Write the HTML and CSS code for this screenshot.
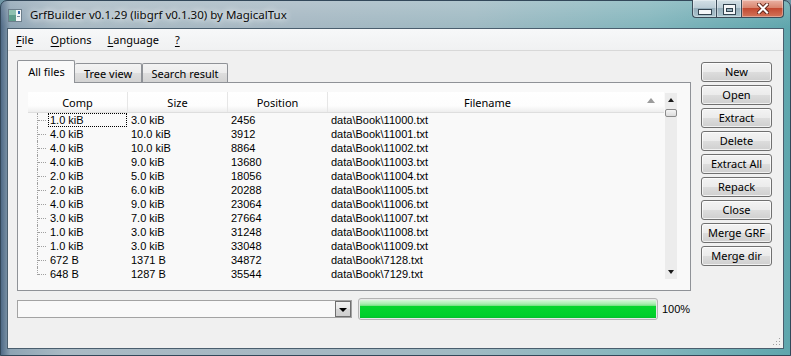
FILE: index.html
```html
<!DOCTYPE html>
<html>
<head>
<meta charset="utf-8">
<title>GrfBuilder</title>
<link rel="stylesheet" href="styles.css">
</head>
<body>
<div class="window">
  <div class="titlebar">
    <svg class="appicon" width="14" height="13" viewBox="0 0 14 13">
      <rect x="0.5" y="0.5" width="13" height="12" fill="#f4f6f8" stroke="#6d7f8c"/>
      <rect x="1" y="1" width="7" height="11" fill="#5f9c8c"/>
      <rect x="1" y="1" width="7" height="5" fill="#8fc0b0"/>
      <rect x="10" y="2" width="2" height="3" fill="#2f63a8"/>
      <rect x="9" y="7" width="3" height="1" fill="#7c8c98"/>
    </svg>
    <span class="title">GrfBuilder v0.1.29 (libgrf v0.1.30) by MagicalTux</span>
    <div class="caption">
      <div class="cap min"><span class="min-glyph"></span></div>
      <div class="cap max"><span class="max-glyph"></span></div>
      <div class="cap close">
        <svg width="12" height="11" viewBox="0 0 12 11">
          <path d="M2 1.5 L10 9.5 M10 1.5 L2 9.5" stroke="#5a2016" stroke-width="4" stroke-linecap="square"/>
          <path d="M2 1.5 L10 9.5 M10 1.5 L2 9.5" stroke="#ffffff" stroke-width="2.2" stroke-linecap="square"/>
        </svg>
      </div>
    </div>
  </div>
  <div class="client">
    <div class="menubar">
      <span class="menu first"><u>F</u>ile</span>
      <span class="menu"><u>O</u>ptions</span>
      <span class="menu"><u>L</u>anguage</span>
      <span class="menu"><u>?</u></span>
    </div>
    <div class="main">
      <div class="left">
        <div class="tabs">
          <div class="tab active">All files</div>
          <div class="tab t2">Tree view</div>
          <div class="tab t3">Search result</div>
        </div>
        <div class="pane">
          <div class="tree">
            <div class="list">
              <div class="header">
                <div class="hcell sep">Comp</div>
                <div class="hcell sep">Size</div>
                <div class="hcell sep">Position</div>
                <div class="hcell last"><span class="hlabel">Filename</span><span class="sort"></span></div>
              </div>
              <div class="row"><div class="c1"><span class="txt focus">1.0 kiB</span></div><div class="c">3.0 kiB</div><div class="c">2456</div><div class="c">data\Book\11000.txt</div></div>
              <div class="row"><div class="c1"><span class="txt">4.0 kiB</span></div><div class="c">10.0 kiB</div><div class="c">3912</div><div class="c">data\Book\11001.txt</div></div>
              <div class="row"><div class="c1"><span class="txt">4.0 kiB</span></div><div class="c">10.0 kiB</div><div class="c">8864</div><div class="c">data\Book\11002.txt</div></div>
              <div class="row"><div class="c1"><span class="txt">4.0 kiB</span></div><div class="c">9.0 kiB</div><div class="c">13680</div><div class="c">data\Book\11003.txt</div></div>
              <div class="row"><div class="c1"><span class="txt">2.0 kiB</span></div><div class="c">5.0 kiB</div><div class="c">18056</div><div class="c">data\Book\11004.txt</div></div>
              <div class="row"><div class="c1"><span class="txt">2.0 kiB</span></div><div class="c">6.0 kiB</div><div class="c">20288</div><div class="c">data\Book\11005.txt</div></div>
              <div class="row"><div class="c1"><span class="txt">4.0 kiB</span></div><div class="c">9.0 kiB</div><div class="c">23064</div><div class="c">data\Book\11006.txt</div></div>
              <div class="row"><div class="c1"><span class="txt">3.0 kiB</span></div><div class="c">7.0 kiB</div><div class="c">27664</div><div class="c">data\Book\11007.txt</div></div>
              <div class="row"><div class="c1"><span class="txt">1.0 kiB</span></div><div class="c">3.0 kiB</div><div class="c">31248</div><div class="c">data\Book\11008.txt</div></div>
              <div class="row"><div class="c1"><span class="txt">1.0 kiB</span></div><div class="c">3.0 kiB</div><div class="c">33048</div><div class="c">data\Book\11009.txt</div></div>
              <div class="row"><div class="c1"><span class="txt">672 B</span></div><div class="c">1371 B</div><div class="c">34872</div><div class="c">data\Book\7128.txt</div></div>
              <div class="row lastrow"><div class="c1"><span class="txt">648 B</span></div><div class="c">1287 B</div><div class="c">35544</div><div class="c">data\Book\7129.txt</div></div>
            </div>
            <div class="vscroll">
              <div class="arrow"><span class="tri-up"></span></div>
              <div class="thumb"></div>
              <div class="track"></div>
              <div class="arrow"><span class="tri-down"></span></div>
            </div>
          </div>
        </div>
        <div class="bottom">
          <div class="combo"><div class="combo-btn"><span class="tri-down dark"></span></div></div>
          <div class="progress"><div class="fill"></div></div>
          <span class="pct">100%</span>
        </div>
      </div>
      <div class="buttons">
        <div class="btn">New</div>
        <div class="btn">Open</div>
        <div class="btn">Extract</div>
        <div class="btn">Delete</div>
        <div class="btn">Extract All</div>
        <div class="btn">Repack</div>
        <div class="btn">Close</div>
        <div class="btn">Merge GRF</div>
        <div class="btn">Merge dir</div>
      </div>
    </div>
    <svg class="grip" width="8" height="8" viewBox="0 0 8 8">
      <rect x="6" y="0" width="1" height="1" fill="#a0a0a0"/>
      <rect x="3" y="3" width="1" height="1" fill="#a0a0a0"/>
      <rect x="6" y="3" width="1" height="1" fill="#a0a0a0"/>
      <rect x="0" y="6" width="1" height="1" fill="#a0a0a0"/>
      <rect x="3" y="6" width="1" height="1" fill="#a0a0a0"/>
      <rect x="6" y="6" width="1" height="1" fill="#a0a0a0"/>
    </svg>
  </div>
</div>
</body>
</html>
```
FILE: styles.css
```css
* { box-sizing: border-box; }
html, body { margin: 0; padding: 0; }
body {
  width: 791px;
  height: 356px;
  overflow: hidden;
  background: #6f96a6;
  font-family: "Noto Sans", "Liberation Sans", sans-serif;
  font-size: 11px;
  color: #000;
}
.window {
  width: 791px;
  height: 356px;
  display: flex;
  flex-direction: column;
  padding: 0 6px 6px 6px;
  border: 1px solid #33485a;
  border-radius: 7px 7px 0 0;
  background:
    linear-gradient(to bottom, rgba(255,255,255,0.18), rgba(255,255,255,0) 26px),
    linear-gradient(to right, #4f6a86 0, #8ea4b4 1.2%, #a9bac4 8%, #a6b8c3 38%, #9fbac3 60%, #84b6bd 82%, #5fa6ad 100%);
}
.titlebar {
  height: 27px;
  flex: none;
  display: flex;
  align-items: flex-start;
}
.appicon { margin: 8px 0 0 1px; flex: none; }
.title {
  margin-left: 8px;
  margin-top: 5px;
  font-size: 11.5px;
  line-height: 17px;
  color: #0b0b0b;
  white-space: nowrap;
  text-shadow: 0 0 6px rgba(255,255,255,0.95), 0 0 10px rgba(255,255,255,0.8);
}
.caption {
  margin-left: auto;
  margin-top: -1px;
  display: flex;
  flex: none;
}
.cap {
  height: 18px;
  border: 1px solid #3b4b58;
  border-top: none;
  display: flex;
  justify-content: center;
  align-items: center;
  box-shadow: inset 0 0 0 1px rgba(255,255,255,0.35);
}
.cap.min {
  width: 24px;
  border-right: none;
  border-radius: 0 0 0 4px;
  background: linear-gradient(#d3e0e6 0, #bccdd6 45%, #97aebb 50%, #acc5ce 100%);
}
.cap.max {
  width: 25px;
  border-right: none;
  background: linear-gradient(#d3e0e6 0, #bccdd6 45%, #97aebb 50%, #acc5ce 100%);
}
.cap.close {
  width: 43px;
  border-radius: 0 0 4px 0;
  background: linear-gradient(#eab2a4 0, #d98670 45%, #c34a32 50%, #d27459 100%);
}
.min-glyph {
  width: 12px;
  height: 4px;
  margin-top: 7px;
  background: #f4f6f8;
  box-shadow: 0 0 0 1px #33434f;
}
.max-glyph {
  width: 11px;
  height: 9px;
  margin-top: 1px;
  border: 2px solid #f4f6f8;
  border-top-width: 3px;
  box-shadow: 0 0 0 1px #33434f, inset 0 0 0 1px #33434f;
}
.client {
  flex: 1;
  position: relative;
  background: #f0f0f0;
  border: 1px solid #4a5e6e;
  display: flex;
  flex-direction: column;
}
.menubar {
  height: 22px;
  flex: none;
  display: flex;
  align-items: center;
  padding-left: 8px;
  gap: 16px;
  background: linear-gradient(#f7f8f9, #f0f1f2);
  border-bottom: 1px solid #d8d8d8;
  font-size: 11px;
  padding-bottom: 1px;
}
.menu { white-space: nowrap; }
.menu.first { margin-right: 1px; }
.menu u { text-decoration: underline; text-underline-offset: 2px; }
.main {
  flex: 1;
  display: flex;
  padding: 9px 0 0 9px;
  gap: 10px;
}
.left {
  width: 674px;
  display: flex;
  flex-direction: column;
}
.tabs {
  height: 22px;
  display: flex;
  align-items: flex-end;
}
.tab {
  height: 19px;
  border: 1px solid #8f9297;
  border-bottom: none;
  border-radius: 2px 2px 0 0;
  display: flex;
  align-items: center;
  justify-content: center;
  background: linear-gradient(#f3f3f3 0, #ececec 50%, #dedede 50%, #d3d3d3 100%);
  white-space: nowrap;
}
.tab.active {
  width: 58px;
  height: 23px;
  margin-bottom: -1px;
  position: relative;
  z-index: 1;
  background: #f9f9f9;
  padding-bottom: 2px;
  padding-left: 1px;
}
.tab.t2 { width: 67px; border-left: none; }
.tab.t3 { width: 86px; border-left: 1px solid #8f9297; }
.pane {
  height: 209px;
  border: 1px solid #8f9297;
  background: #f9f9f9;
  padding: 9px 13px 11px 10px;
}
.tree {
  height: 187px;
  display: flex;
  gap: 1px;
}
.list {
  flex: 1;
  overflow: hidden;
  font-family: "Liberation Sans", Arial, sans-serif;
  font-size: 11px;
}
.header {
  height: 21px;
  display: grid;
  grid-template-columns: 100px 100px 100px 1fr;
  background: linear-gradient(#ffffff 0, #fdfdfd 70%, #eeeeee 100%);
  border-bottom: 1px solid #dedede;
  font-family: "Noto Sans", "Liberation Sans", sans-serif;
}
.hcell {
  display: flex;
  align-items: center;
  justify-content: center;
  height: 20px;
}
.hcell.sep { border-right: 1px solid #e6e6e6; }
.hcell.last { justify-content: flex-start; }
.hlabel { flex: 1; text-align: center; }
.sort {
  width: 0;
  height: 0;
  border-left: 4.5px solid transparent;
  border-right: 4.5px solid transparent;
  border-bottom: 5px solid #9c9c9c;
  margin: 0 9px 4px 0;
}
.row {
  height: 14px;
  line-height: 14px;
  display: grid;
  grid-template-columns: 100px 100px 100px 1fr;
  white-space: nowrap;
}
.c { padding-left: 3px; }
.c1 {
  position: relative;
  display: flex;
}
.c1::before {
  content: "";
  position: absolute;
  left: 9px;
  top: 0;
  height: 14px;
  border-left: 1px dotted #a0a0a0;
}
.lastrow .c1::before { height: 8px; }
.c1::after {
  content: "";
  position: absolute;
  left: 10px;
  top: 7px;
  width: 8px;
  border-top: 1px dotted #a0a0a0;
}
.txt {
  flex: 1;
  margin-left: 20px;
  margin-right: 1px;
  padding-left: 2px;
}
.focus { outline: 1px dotted #000; outline-offset: -1px; }
.vscroll {
  width: 12px;
  margin-top: 1px;
  height: 186px;
  display: flex;
  flex-direction: column;
  background: #ececec;
}
.arrow {
  height: 14px;
  flex: none;
  display: flex;
  align-items: center;
  justify-content: center;
}
.tri-up {
  width: 0; height: 0;
  border-left: 3.5px solid transparent;
  border-right: 3.5px solid transparent;
  border-bottom: 4px solid #1a1a1a;
}
.tri-down {
  width: 0; height: 0;
  border-left: 3.5px solid transparent;
  border-right: 3.5px solid transparent;
  border-top: 4px solid #1a1a1a;
}
.thumb {
  flex: none;
  height: 8px;
  margin-top: 2px;
  border: 1px solid #8a8a8a;
  border-radius: 2px;
  background: linear-gradient(#f4f4f4, #dcdcdc);
}
.track { flex: 1; }
.bottom {
  height: 22px;
  margin-top: 7px;
  display: flex;
  align-items: center;
}
.combo {
  width: 335px;
  height: 18px;
  border: 1px solid #a3a3a3;
  background: #f9f9f9;
  display: flex;
  justify-content: flex-end;
  align-items: center;
  padding-right: 0;
}
.combo-btn {
  width: 16px;
  height: 16px;
  border: 1px solid #6f6f6f;
  background: linear-gradient(#f2f2f2 0, #e6e6e6 50%, #d6d6d6 50%, #cfcfcf 100%);
  display: flex;
  align-items: center;
  justify-content: center;
  padding-top: 1px;
}
.tri-down.dark { border-top-color: #000; border-left-width: 4px; border-right-width: 4px; }
.progress {
  width: 300px;
  height: 22px;
  margin-left: 6px;
  border: 1px solid #b3b3b3;
  border-radius: 3px;
  background: #e8e8e8;
  padding: 1px;
}
.fill {
  width: 100%;
  height: 100%;
  background: linear-gradient(to bottom, #d8f8da 0%, #a6eeae 22%, #72e07e 33%, #06d52d 36%, #00d02a 88%, #04bf2a 100%);
}
.pct { margin-left: 4px; font-family: "Liberation Sans", Arial, sans-serif; font-size: 11px; }
.buttons {
  width: 71px;
  margin-top: 2px;
  display: flex;
  flex-direction: column;
  gap: 3px;
}
.btn {
  height: 20px;
  border: 1px solid #707070;
  border-radius: 3px;
  background: linear-gradient(#f3f3f3 0, #ebebeb 50%, #dddddd 50%, #cfcfcf 100%);
  box-shadow: inset 0 0 0 1px rgba(255,255,255,0.7);
  display: flex;
  align-items: center;
  justify-content: center;
  white-space: nowrap;
  padding-bottom: 1px;
}
.grip {
  position: absolute;
  right: 2px;
  bottom: 2px;
}
```
